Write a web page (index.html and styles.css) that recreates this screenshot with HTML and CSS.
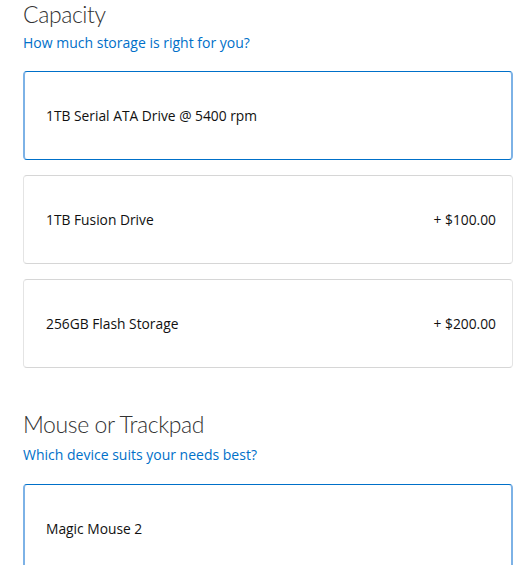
FILE: index.html
```html
<!DOCTYPE html>
<html>
<head>
<meta charset="utf-8">
<link rel="stylesheet" href="styles.css">
</head>
<body>
<div class="page">
  <section class="group">
    <h2 class="group-title">Capacity</h2>
    <a class="group-help">How much storage is right for you?</a>
    <div class="options">
      <div class="option selected"><span class="name">1TB Serial ATA Drive @ 5400 rpm</span></div>
      <div class="option"><span class="name">1TB Fusion Drive</span><span class="price">+ $100.00</span></div>
      <div class="option"><span class="name">256GB Flash Storage</span><span class="price">+ $200.00</span></div>
    </div>
  </section>
  <section class="group group-next">
    <h2 class="group-title">Mouse or Trackpad</h2>
    <a class="group-help">Which device suits your needs best?</a>
    <div class="options">
      <div class="option selected"><span class="name">Magic Mouse 2</span></div>
    </div>
  </section>
</div>
</body>
</html>
```

FILE: styles.css
```css
html, body {
  margin: 0;
  padding: 0;
  background: #fff;
}
body {
  font-family: "Open Sans", "Liberation Sans", sans-serif;
  color: #111;
  overflow: hidden;
}
.page {
  padding: 0 2px 0 23px;
}
.group {
  display: flex;
  flex-direction: column;
}
.group-next {
  margin-top: 42px;
}
.group-title {
  margin: 0;
  font-family: "Lato", "Open Sans", sans-serif;
  font-size: 23px;
  font-weight: 300;
  letter-spacing: -0.4px;
  line-height: 28px;
  color: #333;
}
.group-help {
  margin-top: 3px;
  font-size: 14px;
  line-height: 24px;
  color: #0070c9;
}
.group-next .group-help {
  margin-top: 5px;
}
.options {
  margin-top: 16px;
  display: flex;
  flex-direction: column;
  gap: 15px;
}
.group-next .options {
  margin-top: 17px;
}
.option {
  height: 89px;
  box-sizing: border-box;
  display: flex;
  align-items: center;
  justify-content: space-between;
  padding: 0 16px 0 22px;
  border: 1px solid #d6d6d6;
  border-left-color: #e4e4e4;
  border-right-color: #e4e4e4;
  border-radius: 4px;
  font-size: 13.8px;
  color: #111;
}
.option.selected {
  border-color: #0070c9;
  border-left-color: #7db2e6;
  border-right-color: #7db2e6;
  border-width: 1px 2px;
}
.option.selected .name {
  margin-left: -1px;
}
```
